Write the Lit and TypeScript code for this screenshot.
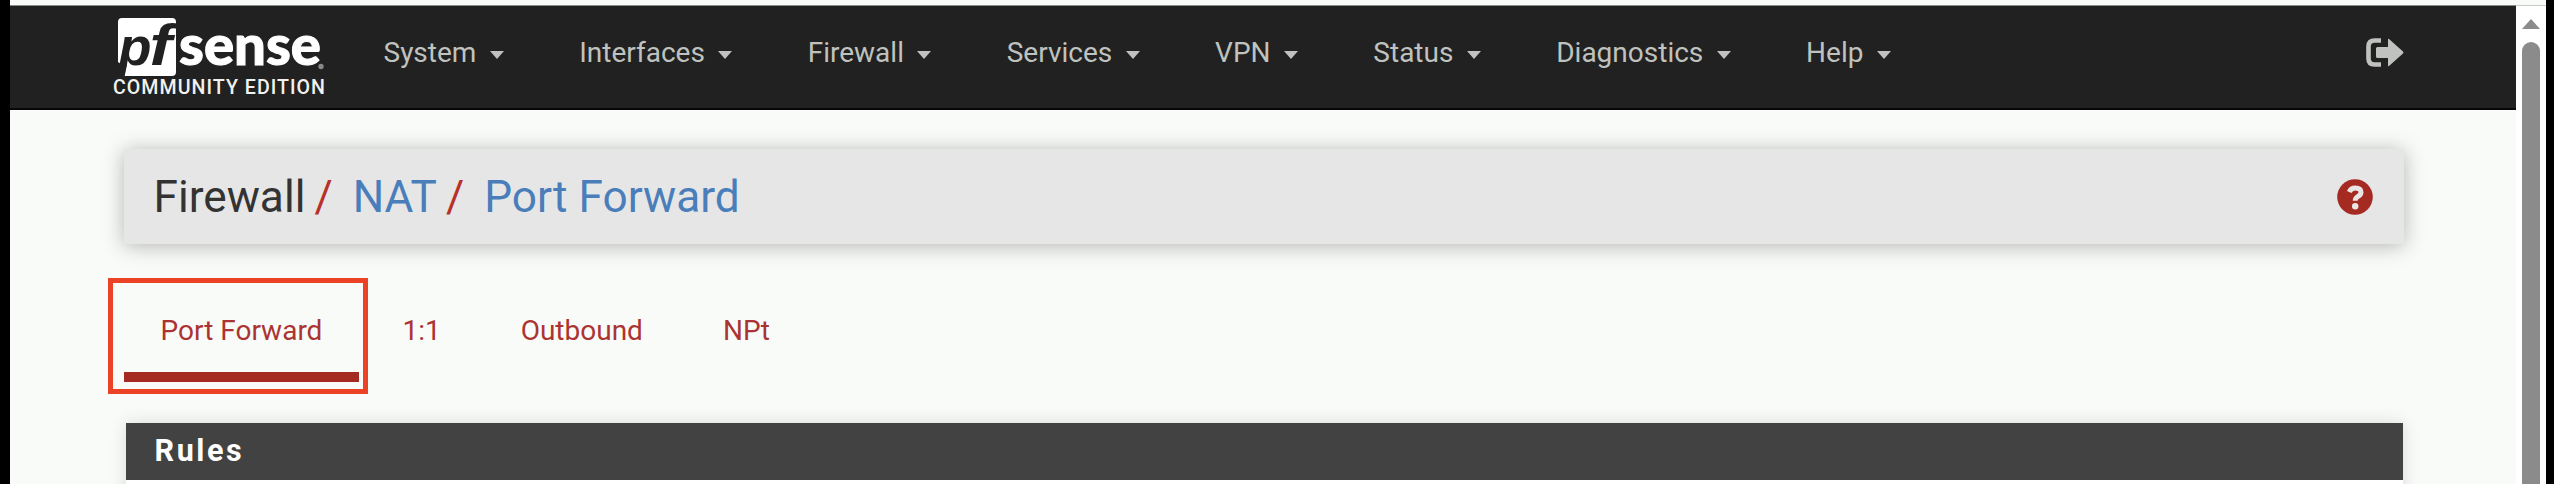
import { LitElement, html, css } from "lit";
import { customElement } from "lit/decorators.js";

@customElement("pf-logo")
class PfLogo extends LitElement {
  static styles = css`
    :host { display: block; width: 212px; height: 84px; }
    svg { display: block; overflow: visible; }
    .p { font: italic 700 54px "Liberation Sans", sans-serif; fill: #212121; }
    .f { font: italic 700 58px "Liberation Sans", sans-serif; fill: #212121; }
    .word { font: 900 55px Lato, sans-serif; fill: #fff; stroke: #fff; stroke-width: 1px; }
    .edition { font: 500 19.6px Roboto, sans-serif; fill: #f1f1ef; }
    .reg { fill: #888; }
  `;
  render() {
    return html`<svg width="212" height="84" viewBox="112 16 212 84">
      <path d="M118 22q0-4 4-4h50q4 0 4 4v50q0 4-4 4h-48l3-12h-6l-3-2z" fill="#fff" />
      <text class="p" x="118.500" y="65" textLength="33" lengthAdjust="spacingAndGlyphs">p</text>
      <text class="f" x="149.500" y="65" textLength="22.500" lengthAdjust="spacingAndGlyphs">f</text>
      <text class="word" x="179" y="65.200" textLength="142" lengthAdjust="spacingAndGlyphs">sense</text>
      <circle class="reg" cx="321" cy="66.500" r="2.700" />
      <text class="edition" x="113" y="94.300" textLength="212">COMMUNITY EDITION</text>
    </svg>`;
  }
}

@customElement("app-root")
class AppRoot extends LitElement {
  static styles = css`
    :host {
      display: grid;
      grid-template-columns: 10px 2506px 30px 8px;
      height: 484px;
      overflow: hidden;
      background: #000;
      font: 28px/32px Roboto, sans-serif;
    }
    * { box-sizing: border-box; }
    .page { grid-column: 2; background: #f9fbf8; height: 484px; overflow: hidden; }
    .strip { height: 6px; border-bottom: 1px solid #888b88; }
    .nav {
      display: flex; align-items: flex-start; height: 104px;
      background: #212121; border-bottom: 2px solid #080808;
      padding: 10px 112px 0 102px; color: #bfc2be;
    }
    .menu { display: flex; gap: 75.500px; padding: 21px 0 0 59.500px; }
    .item { display: flex; align-items: center; }
    .caret {
      margin: 3px 0 0 13.300px; border: 7.750px solid transparent;
      border-top: 8px solid #bfc2be; border-bottom: 0;
    }
    .out { margin: 22px 0 0 auto; display: block; }
    .content { padding: 39px 112px 0 114px; }
    .crumbs {
      display: flex; align-items: center; height: 95px; padding: 1px 31px 0 29.500px;
      background: #e6e6e6; color: #333; font-size: 44.200px; line-height: 52px;
      box-shadow: 0 2px 20px rgba(0, 0, 0, .28);
    }
    .slash { color: #b8302a; margin: 0 20px 0 9px; }
    .link { color: #4a7ebb; }
    .help { margin-left: auto; display: block; }
    .tabs { display: flex; gap: 7px; margin-top: 49px; height: 89px; color: #ab3433; }
    .tab { padding: 22px 36.500px 0; height: 89px; position: relative; }
    .tab.active { border-bottom: 10px solid #a52a22; }
    .outline {
      position: absolute; left: -16.500px; top: -15px; width: 260px; height: 116px;
      border: 5px solid #ec4226;
    }
    .panel {
      margin: 41px 0 0 2px; width: 2277px; height: 90px; background: #fff;
      box-shadow: 0 0 16px rgba(0, 0, 0, .13);
    }
    .title {
      height: 57px; padding: 12px 28.500px 0; background: #424242; color: #fff;
      font-size: 30.500px; font-weight: 700; letter-spacing: 2.600px;
    }
    .scroll {
      grid-column: 3; background: #fff; display: flex; flex-direction: column;
      align-items: center; height: 484px; overflow: hidden;
    }
    .edge { width: 30px; height: 5.500px; flex: none; background: #f9fbf8; border-bottom: 1.500px solid #c8cac8; }
    .up { flex: none; margin-top: 13px; border: 9px solid transparent; border-top: 0; border-bottom: 10px solid #8b8b8b; }
    .thumb { flex: 1; margin-top: 13px; width: 18px; border-radius: 9px 9px 0 0; background: #8b8b8b; }
  `;

  menus = ["System", "Interfaces", "Firewall", "Services", "VPN", "Status", "Diagnostics", "Help"];
  tabs = ["Port Forward", "1:1", "Outbound", "NPt"];

  render() {
    return html`
      <div class="page">
        <div class="strip"></div>
        <nav class="nav">
          <pf-logo></pf-logo>
          <div class="menu">
            ${this.menus.map((m) => html`<div class="item">${m}<i class="caret"></i></div>`)}
          </div>
          <svg class="out" width="38" height="29" viewBox="0 0 38 29">
            <path d="M15 2.500H8.500Q2.500 2.500 2.500 8.500V20.500Q2.500 26.500 8.500 26.500H15" fill="none" stroke="#bfc2be" stroke-width="4.600" />
            <path d="M11.500 9H22V1.500Q22 .2 23 1L37 13.500Q38 14.500 37 15.500L23 28Q22 28.800 22 27.500V20H11.500Q10 20 10 18.500V10.500Q10 9 11.500 9z" fill="#bfc2be" />
          </svg>
        </nav>
        <div class="content">
          <div class="crumbs">
            <span>Firewall</span><span class="slash">/</span><span class="link">NAT</span><span class="slash">/</span><span class="link">Port Forward</span>
            <svg class="help" width="36" height="36" viewBox="0 0 36 36">
              <circle cx="18" cy="18" r="17.800" fill="#a52a22" />
              <path d="M12.200 13Q14 9 18.200 9Q24 9 24 13.300Q24 16 20.800 17.600Q18.200 19 18.200 21.800" fill="none" stroke="#e9e6e6" stroke-width="5" />
              <circle cx="18.200" cy="27.300" r="3.200" fill="#e9e6e6" />
            </svg>
          </div>
          <div class="tabs">
            ${this.tabs.map((t, i) => i === 0
              ? html`<div class="tab active">${t}<div class="outline"></div></div>`
              : html`<div class="tab">${t}</div>`)}
          </div>
          <div class="panel"><div class="title">Rules</div></div>
        </div>
      </div>
      <div class="scroll"><div class="edge"></div><div class="up"></div><div class="thumb"></div></div>
    `;
  }
}
